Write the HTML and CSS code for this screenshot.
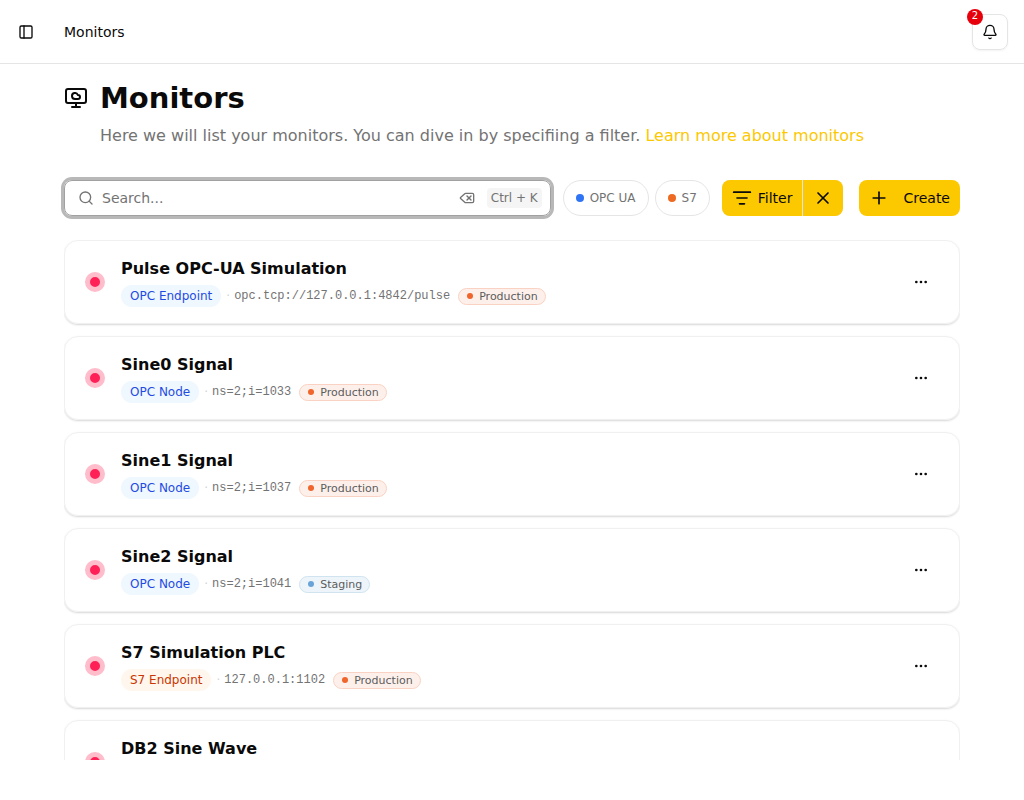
FILE: index.html
```
<!DOCTYPE html>
<html lang="en">
<head>
  <meta charset="UTF-8">
  <meta name="viewport" content="width=device-width, initial-scale=1.0">
  <title>Monitors</title>
  <link rel="stylesheet" href="styles.css">
</head>
<body>
  <!-- shared icons -->
  <svg class="sprite" aria-hidden="true">
    <symbol id="icon-more" viewBox="0 0 24 24">
      <circle cx="5" cy="12" r="1"/><circle cx="12" cy="12" r="1"/><circle cx="19" cy="12" r="1"/>
    </symbol>
  </svg>

  <header class="topbar">
    <button class="icon-button" aria-label="Toggle sidebar">
      <svg class="icon" viewBox="0 0 24 24"><rect x="3" y="3" width="18" height="18" rx="2"/><path d="M9 3v18"/></svg>
    </button>
    <span class="crumb">Monitors</span>
    <button class="icon-button bell" aria-label="Notifications">
      <svg class="icon" viewBox="0 0 24 24"><path d="M10.268 21a2 2 0 0 0 3.464 0"/><path d="M3.262 15.326A1 1 0 0 0 4 17h16a1 1 0 0 0 .74-1.673C19.41 13.956 18 12.499 18 8A6 6 0 0 0 6 8c0 4.499-1.411 5.956-2.738 7.326"/></svg>
      <span class="bell-count">2</span>
    </button>
  </header>

  <main>
    <div class="page-head">
      <svg class="icon icon-lg" viewBox="0 0 24 24"><path d="M11 13a3 3 0 1 1 2.83-4H14a2 2 0 0 1 0 4z"/><path d="M12 17v4"/><path d="M8 21h8"/><rect x="2" y="3" width="20" height="14" rx="2"/></svg>
      <h1>Monitors</h1>
      <p>Here we will list your monitors. You can dive in by specifiing a filter. <a href="#">Learn more about monitors</a></p>
    </div>

    <div class="toolbar">
      <div class="search">
        <svg class="icon" viewBox="0 0 24 24"><path d="m21 21-4.34-4.34"/><circle cx="11" cy="11" r="8"/></svg>
        <input type="text" placeholder="Search..." aria-label="Search monitors">
        <button class="clear" aria-label="Clear search">
          <svg class="icon" viewBox="0 0 24 24"><path d="M10 5a2 2 0 0 0-1.344.519l-6.328 5.74a1 1 0 0 0 0 1.481l6.328 5.741A2 2 0 0 0 10 19h10a2 2 0 0 0 2-2V7a2 2 0 0 0-2-2z"/><path d="m12 9 6 6"/><path d="m18 9-6 6"/></svg>
        </button>
        <kbd>Ctrl + K</kbd>
      </div>
      <div class="chips">
        <button class="chip opc">OPC UA</button>
        <button class="chip s7">S7</button>
      </div>
      <div class="actions">
        <div class="split">
          <button class="primary filter">
            <svg class="icon icon-md" viewBox="0 0 24 24"><path d="M2 5h20"/><path d="M6 12h12"/><path d="M9 19h6"/></svg>
            Filter
          </button>
          <button class="primary reset" aria-label="Reset filter">
            <svg class="icon icon-md" viewBox="0 0 24 24"><path d="M18 6 6 18"/><path d="m6 6 12 12"/></svg>
          </button>
        </div>
        <button class="primary create">
          <svg class="icon icon-md" viewBox="0 0 24 24"><path d="M5 12h14"/><path d="M12 5v14"/></svg>
          Create
        </button>
      </div>
    </div>

    <div class="monitors">
      <article class="card">
        <span class="status"></span>
        <div class="info">
          <h2>Pulse OPC-UA Simulation</h2>
          <div class="meta">
            <span class="type opc">OPC Endpoint</span><span class="sep">·</span><code>opc.tcp://127.0.0.1:4842/pulse</code><span class="env production">Production</span>
          </div>
        </div>
        <button class="icon-button" aria-label="More"><svg class="icon"><use href="#icon-more"/></svg></button>
      </article>

      <article class="card">
        <span class="status"></span>
        <div class="info">
          <h2>Sine0 Signal</h2>
          <div class="meta">
            <span class="type opc">OPC Node</span><span class="sep">·</span><code>ns=2;i=1033</code><span class="env production">Production</span>
          </div>
        </div>
        <button class="icon-button" aria-label="More"><svg class="icon"><use href="#icon-more"/></svg></button>
      </article>

      <article class="card">
        <span class="status"></span>
        <div class="info">
          <h2>Sine1 Signal</h2>
          <div class="meta">
            <span class="type opc">OPC Node</span><span class="sep">·</span><code>ns=2;i=1037</code><span class="env production">Production</span>
          </div>
        </div>
        <button class="icon-button" aria-label="More"><svg class="icon"><use href="#icon-more"/></svg></button>
      </article>

      <article class="card">
        <span class="status"></span>
        <div class="info">
          <h2>Sine2 Signal</h2>
          <div class="meta">
            <span class="type opc">OPC Node</span><span class="sep">·</span><code>ns=2;i=1041</code><span class="env staging">Staging</span>
          </div>
        </div>
        <button class="icon-button" aria-label="More"><svg class="icon"><use href="#icon-more"/></svg></button>
      </article>

      <article class="card">
        <span class="status"></span>
        <div class="info">
          <h2>S7 Simulation PLC</h2>
          <div class="meta">
            <span class="type s7">S7 Endpoint</span><span class="sep">·</span><code>127.0.0.1:1102</code><span class="env production">Production</span>
          </div>
        </div>
        <button class="icon-button" aria-label="More"><svg class="icon"><use href="#icon-more"/></svg></button>
      </article>

      <article class="card">
        <span class="status"></span>
        <div class="info">
          <h2>DB2 Sine Wave</h2>
          <div class="meta"></div>
        </div>
        <button class="icon-button" aria-label="More"><svg class="icon"><use href="#icon-more"/></svg></button>
      </article>
    </div>
  </main>
</body>
</html>
```
FILE: styles.css
```
* {
  box-sizing: border-box;
}
body {
  margin: 0;
  height: 100vh;
  display: flex;
  flex-direction: column;
  font-family: 'DejaVu Sans', sans-serif;
  font-size: 14px;
  line-height: 20px;
  color: #0a0a0a;
  background: #fff;
}
button, input {
  font: inherit;
  color: inherit;
}
button {
  border: none;
  background: none;
  padding: 0;
  cursor: pointer;
}
.sprite {
  display: none;
}
.icon {
  width: 16px;
  height: 16px;
  flex: none;
  display: block;
  fill: none;
  stroke: currentColor;
  stroke-width: 2;
  stroke-linecap: round;
  stroke-linejoin: round;
}
.icon-md {
  width: 20px;
  height: 20px;
}
.icon-lg {
  width: 24px;
  height: 24px;
}
.icon-button {
  width: 36px;
  height: 36px;
  flex: none;
  display: flex;
  align-items: center;
  justify-content: center;
  border-radius: 8px;
}

/* top bar */
.topbar {
  height: 64px;
  flex: none;
  display: flex;
  align-items: center;
  padding: 0 16px 0 8px;
  border-bottom: 1px solid #e5e5e5;
}
.crumb {
  margin-left: 20px;
}
.bell {
  position: relative;
  margin-left: auto;
  border: 1px solid #e5e5e5;
  box-shadow: 0 1px 2px rgba(0,0,0,0.05);
}
.bell-count {
  position: absolute;
  top: -6px;
  left: -6px;
  width: 16px;
  height: 16px;
  border-radius: 50%;
  background: #e7000b;
  color: #fff;
  font-size: 10px;
  line-height: 14px;
  text-align: center;
}

/* page */
main {
  flex: 1;
  min-height: 0;
  display: flex;
  flex-direction: column;
  padding: 16px 64px 40px;
}
.page-head {
  display: grid;
  grid-template-columns: 24px 1fr;
  column-gap: 12px;
  row-gap: 8px;
  align-items: center;
}
h1 {
  margin: 0;
  font-size: 29px;
  line-height: 36px;
}
.page-head p {
  grid-column: 2;
  margin: 0;
  font-size: 16px;
  line-height: 24px;
  color: #737373;
}
.page-head a {
  color: #fcc800;
  text-decoration: none;
}

.toolbar {
  display: flex;
  gap: 12px;
  margin: 32px 0 24px;
}
.search {
  flex: 1;
  min-width: 0;
  height: 36px;
  display: flex;
  align-items: center;
  padding: 0 8px 0 13px;
  border: 1px solid #a1a1a1;
  border-radius: 8px;
  box-shadow: 0 0 0 3px #b8b8b8;
  color: #737373;
}
.search input {
  flex: 1;
  min-width: 0;
  padding: 0 8px;
  border: none;
  outline: none;
  background: none;
}
.search input::placeholder {
  color: #737373;
  opacity: 1;
}
.search kbd {
  margin-left: 12px;
  padding: 0 4px;
  border-radius: 4px;
  background: #f5f5f5;
  font-family: inherit;
  font-size: 12px;
}
.chips {
  display: flex;
  gap: 6px;
}
.chip {
  display: flex;
  align-items: center;
  gap: 6px;
  padding: 0 12px;
  border: 1px solid #e5e5e5;
  border-radius: 18px;
  font-size: 12px;
  color: #737373;
}
.chip::before {
  content: "";
  width: 8px;
  height: 8px;
  border-radius: 50%;
}
.chip.opc::before {
  background: #2f74f5;
}
.chip.s7::before {
  background: #ee6a22;
}
.actions {
  display: flex;
  gap: 16px;
}
.split {
  display: flex;
  gap: 1px;
  background: #e5e5e5;
  border-radius: 8px;
  overflow: hidden;
}
.primary {
  height: 36px;
  display: flex;
  align-items: center;
  padding: 0 10px;
  background: #fcc800;
}
.filter {
  gap: 6px;
}
.create {
  gap: 14px;
  border-radius: 8px;
}

/* list */
.monitors {
  flex: 1;
  min-height: 0;
  display: flex;
  flex-direction: column;
  gap: 12px;
  overflow-y: auto;
  scrollbar-width: none;
}
.card {
  flex: none;
  display: flex;
  align-items: center;
  gap: 16px;
  padding: 16px 20px;
  border: 1px solid #f0f0f0;
  border-radius: 14px;
  box-shadow: 0 1px 2px rgba(0,0,0,0.16);
}
.status {
  width: 20px;
  height: 20px;
  flex: none;
  border: 5px solid #ffbccb;
  border-radius: 50%;
  background: #ff2056;
}
.info {
  flex: 1;
  min-width: 0;
}
h2 {
  margin: 0;
  font-size: 16px;
  line-height: 24px;
}
.meta {
  display: flex;
  align-items: center;
  height: 22px;
  margin-top: 4px;
  font-size: 12px;
}
.type {
  padding: 1px 9px;
  border-radius: 11px;
}
.type.opc {
  background: #eff7ff;
  color: #1f4be2;
}
.type.s7 {
  background: #fff7ed;
  color: #ca3500;
}
.sep {
  margin: 0 4px 0 5px;
  color: #d4d4d4;
}
code {
  font-family: 'Liberation Mono', monospace;
  font-size: 12px;
  color: #737373;
}
.env {
  display: flex;
  align-items: center;
  gap: 6px;
  margin-left: 8px;
  padding: 0 7px 0 8px;
  border: 1px solid;
  border-radius: 9px;
  font-size: 11px;
  line-height: 15px;
  color: #5c5c5c;
}
.env::before {
  content: "";
  width: 6px;
  height: 6px;
  border-radius: 50%;
}
.env.production {
  background: #fdf0eb;
  border-color: #fad2c3;
}
.env.production::before {
  background: #f0652b;
}
.env.staging {
  background: #edf5fa;
  border-color: #d0e4f0;
}
.env.staging::before {
  background: #6aa3d8;
}
```
